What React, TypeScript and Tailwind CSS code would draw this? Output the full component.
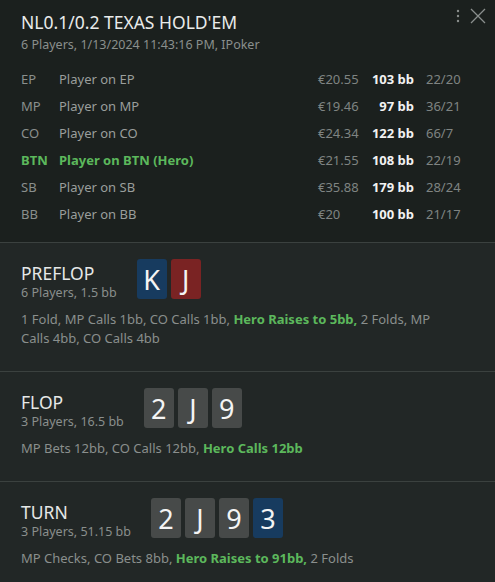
import React from "react";

type Seat = {
  pos: string;
  name: string;
  money: string;
  bb: string;
  stats: string;
  hero?: boolean;
};

const seats: Seat[] = [
  { pos: "EP", name: "Player on EP", money: "€20.55", bb: "103 bb", stats: "22/20" },
  { pos: "MP", name: "Player on MP", money: "€19.46", bb: "97 bb", stats: "36/21" },
  { pos: "CO", name: "Player on CO", money: "€24.34", bb: "122 bb", stats: "66/7" },
  { pos: "BTN", name: "Player on BTN (Hero)", money: "€21.55", bb: "108 bb", stats: "22/19", hero: true },
  { pos: "SB", name: "Player on SB", money: "€35.88", bb: "179 bb", stats: "28/24" },
  { pos: "BB", name: "Player on BB", money: "€20", bb: "100 bb", stats: "21/17" },
];

type Card = { rank: string; tone: "blue" | "red" | "gray" };

const toneClass: Record<Card["tone"], string> = {
  blue: "bg-[#173b5f]",
  red: "bg-[#7a2323]",
  gray: "bg-[#474a49]",
};

function Cards({ cards }: { cards: Card[] }) {
  return (
    <div className="flex gap-1">
      {cards.map((c, i) => (
        <div
          key={i}
          className={`w-[30px] h-[40px] rounded-[3px] flex items-center justify-center text-[27px] leading-none text-[#f4f4f4] ${toneClass[c.tone]}`}
        >
          {c.rank}
        </div>
      ))}
    </div>
  );
}

function Street({
  title,
  sub,
  cards,
  children,
  last,
}: {
  title: string;
  sub: string;
  cards: Card[];
  children: React.ReactNode;
  last?: boolean;
}) {
  return (
    <section
      className={`px-[21px] pt-[16px] ${last ? "pb-[20px]" : "pb-[23px] border-b border-[#3b413f]"}`}
    >
      <div className="flex items-start gap-5">
        <div className="flex flex-col pt-[3px]">
          <div className="text-[17.5px] leading-[22px] text-[#e6e8e7]">{title}</div>
          <div className="text-[12.5px] leading-[18px] text-[#8a8f8d]">{sub}</div>
        </div>
        <Cards cards={cards} />
      </div>
      <p className="mt-[8px] max-w-[420px] text-[13px] leading-[19px] text-[#8a8f8d]">{children}</p>
    </section>
  );
}

function Hero({ children }: { children: React.ReactNode }) {
  return <span className="font-bold text-[#5cb85c]">{children}</span>;
}

export default function App() {
  return (
    <div
      className="w-[495px] h-[582px] overflow-hidden bg-[#222726]"
      style={{ fontFamily: "'Noto Sans', 'Open Sans', sans-serif" }}
    >
      <header className="relative bg-[#1b201e] px-[21px] pt-[10px] pb-[14px] border-b border-[#3b413f]">
        <div className="absolute right-[7px] top-[6px] flex items-center gap-[8px] text-[#8a8f8d]">
          <svg width="4" height="16" viewBox="0 0 4 16" fill="currentColor">
            <circle cx="2" cy="3" r="1.2" />
            <circle cx="2" cy="8" r="1.2" />
            <circle cx="2" cy="13" r="1.2" />
          </svg>
          <svg width="20" height="20" viewBox="0 0 20 20" stroke="currentColor" strokeWidth="1.3" fill="none">
            <path d="M3 3 L17 17 M17 3 L3 17" />
          </svg>
        </div>
        <h1 className="text-[17.5px] leading-[24px] text-[#e9ebea]">NL0.1/0.2 TEXAS HOLD'EM</h1>
        <div className="text-[12.5px] leading-[22px] text-[#8a8f8d]">
          6 Players, 1/13/2024 11:43:16 PM, IPoker
        </div>
        <div className="mt-[10px] flex flex-col">
          {seats.map((s) => (
            <div
              key={s.pos}
              className={`flex items-center h-[27px] text-[13px] ${s.hero ? "text-[#5cb85c] font-bold" : "text-[#8a8f8d]"}`}
            >
              <span className="w-[38px]">{s.pos}</span>
              <span className={`flex-1 ${s.hero ? "" : "text-[#9a9e9c]"}`}>{s.name}</span>
              <span className="w-[46px] font-normal text-[#7f8482]">{s.money}</span>
              <span className="w-[50px] text-right font-bold text-[#f2f2f2]">{s.bb}</span>
              <span className="ml-3 w-[48px] font-normal text-[#7f8482]">{s.stats}</span>
            </div>
          ))}
        </div>
      </header>

      <Street
        title="PREFLOP"
        sub="6 Players, 1.5 bb"
        cards={[
          { rank: "K", tone: "blue" },
          { rank: "J", tone: "red" },
        ]}
      >
        1 Fold, MP Calls 1bb, CO Calls 1bb, <Hero>Hero Raises to 5bb,</Hero> 2 Folds, MP Calls 4bb, CO Calls 4bb
      </Street>

      <Street
        title="FLOP"
        sub="3 Players, 16.5 bb"
        cards={[
          { rank: "2", tone: "gray" },
          { rank: "J", tone: "gray" },
          { rank: "9", tone: "gray" },
        ]}
      >
        MP Bets 12bb, CO Calls 12bb, <Hero>Hero Calls 12bb</Hero>
      </Street>

      <Street
        title="TURN"
        sub="3 Players, 51.15 bb"
        last
        cards={[
          { rank: "2", tone: "gray" },
          { rank: "J", tone: "gray" },
          { rank: "9", tone: "gray" },
          { rank: "3", tone: "blue" },
        ]}
      >
        MP Checks, CO Bets 8bb, <Hero>Hero Raises to 91bb,</Hero> 2 Folds
      </Street>
    </div>
  );
}
